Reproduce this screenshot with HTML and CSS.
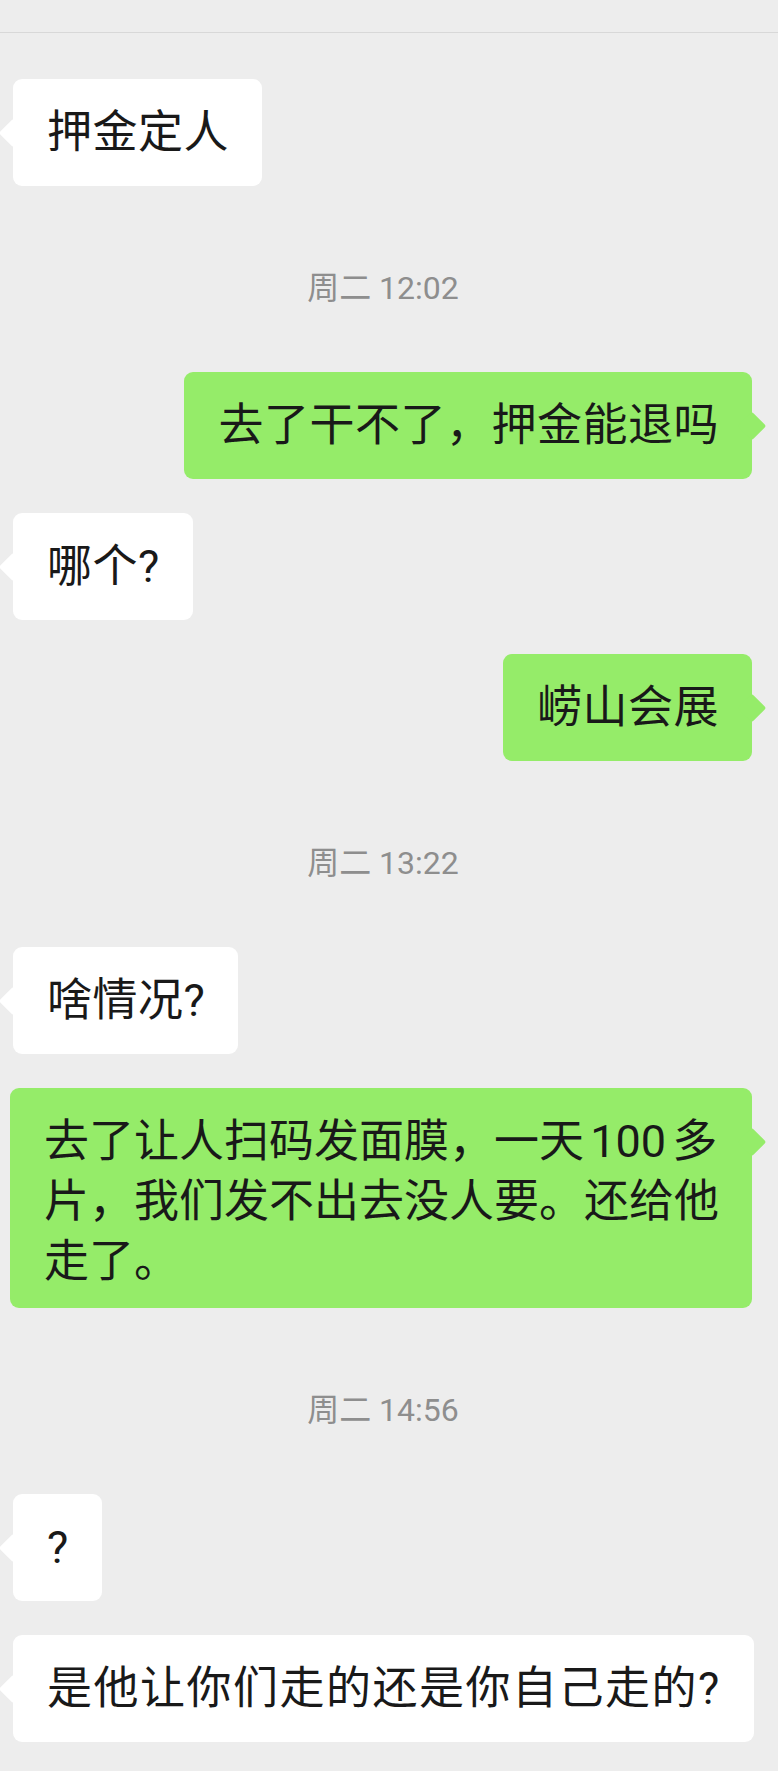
FILE: index.html
```html
<!DOCTYPE html>
<html lang="zh-CN">
<head>
<meta charset="utf-8">
<title>聊天</title>
<link rel="stylesheet" href="styles.css">
</head>
<body>
<div class="topbar"></div>
<main class="chat">
  <div class="row in"><div class="bubble">押金定人</div></div>
  <div class="time">周二 12:02</div>
  <div class="row out"><div class="bubble">去了干不了，押金能退吗</div></div>
  <div class="row in"><div class="bubble">哪个?</div></div>
  <div class="row out"><div class="bubble">崂山会展</div></div>
  <div class="time">周二 13:22</div>
  <div class="row in"><div class="bubble">啥情况?</div></div>
  <div class="row out"><div class="bubble tight">去了让人扫码发面膜，一天 100 多片，我们发不出去没人要。还给他走了。</div></div>
  <div class="time">周二 14:56</div>
  <div class="row in"><div class="bubble">?</div></div>
  <div class="row in"><div class="bubble spaced">是他让你们走的还是你自己走的?</div></div>
</main>
</body>
</html>
```

FILE: styles.css
```css
html, body {
  margin: 0;
  background: #ededed;
}

body {
  font-family: Roboto, "Noto Sans CJK SC", sans-serif;
  color: #191919;
}

.topbar {
  height: 32px;
  border-bottom: 1px solid #d8d8d8;
}

.chat {
  width: 766px;
  box-sizing: border-box;
  display: flex;
  flex-direction: column;
  gap: 34px;
  padding: 46px 0 28px 0;
}

.row {
  display: flex;
}

.row.in {
  justify-content: flex-start;
  padding-left: 13px;
}

.row.out {
  justify-content: flex-end;
  padding-right: 14px;
}

.bubble {
  position: relative;
  max-width: 675px;
  min-height: 67px;
  padding: 24px 33px 16px 34px;
  font-size: 45px;
  line-height: 60px;
  letter-spacing: 0.5px;
  border-radius: 9px;
  background: #ffffff;
  word-break: break-all;
}

.out .bubble {
  background: #95ec69;
}

.bubble::before {
  content: "";
  position: absolute;
  top: 44px;
  width: 20px;
  height: 20px;
  background: inherit;
  border-radius: 2px;
  transform: rotate(45deg);
}

.in .bubble::before {
  left: -10px;
}

.out .bubble::before {
  right: -10px;
}

.bubble.tight {
  letter-spacing: 0;
  word-spacing: -5px;
}

.bubble.spaced {
  max-width: 690px;
  letter-spacing: 1.5px;
}

.time {
  padding: 48px 0 30px;
  font-size: 32px;
  line-height: 40px;
  color: #8e8e8e;
  text-align: center;
}
```
